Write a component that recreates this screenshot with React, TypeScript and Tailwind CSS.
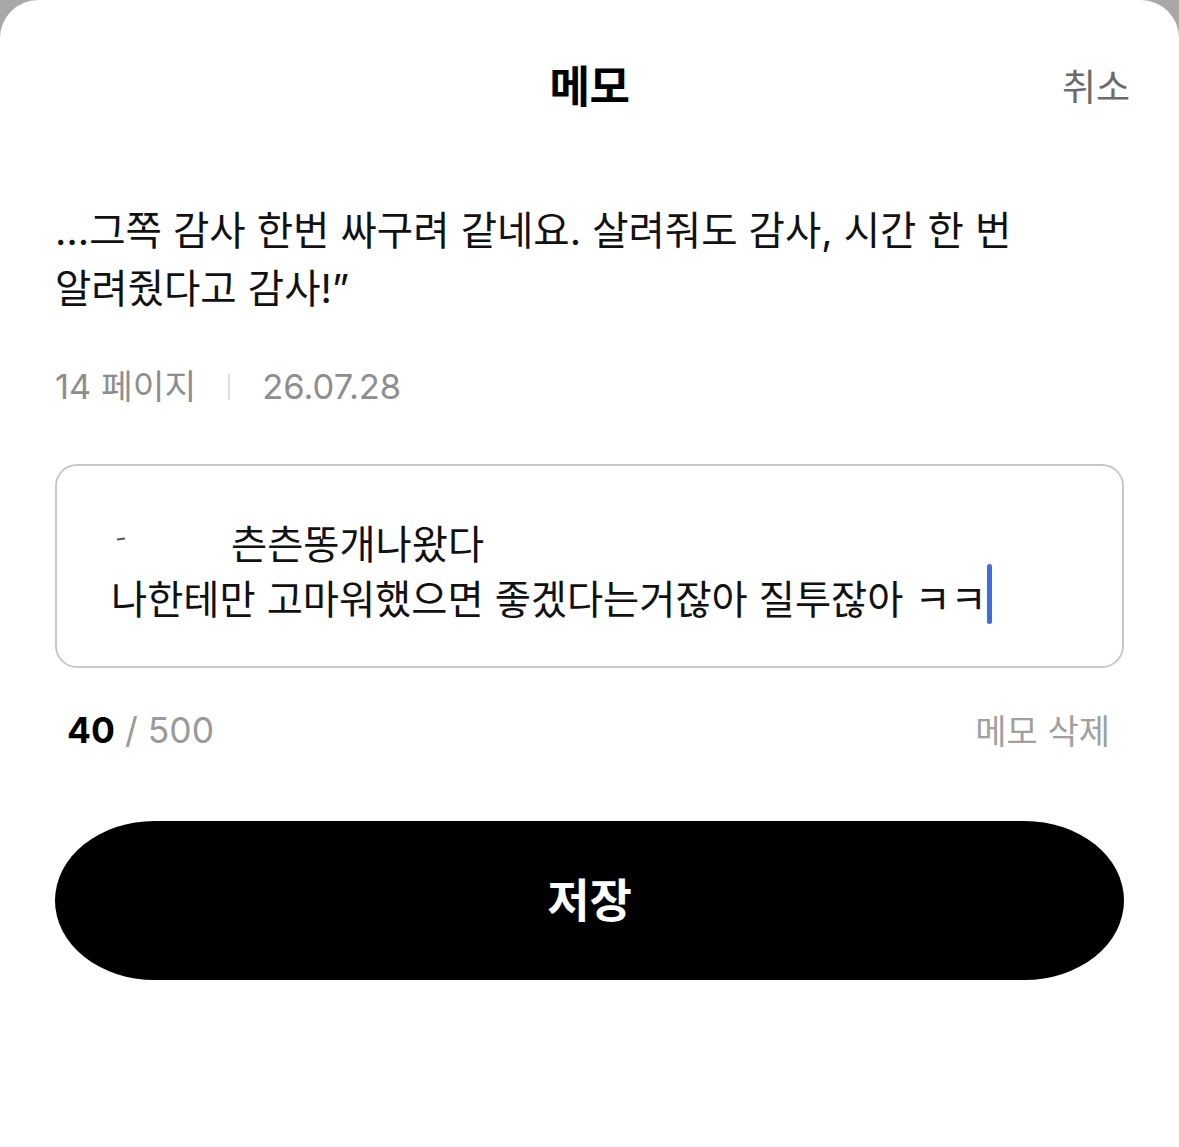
export default function App() {
  return (
    <div className="min-h-[1147px] w-full bg-[#a8a8a8] font-['Inter','Noto_Sans_CJK_KR',sans-serif]">
      <div className="min-h-[1147px] bg-white rounded-t-[38px] px-[55px] flex flex-col">
        {/* Header */}
        <div className="h-[170px] grid grid-cols-[1fr_auto_1fr] items-center">
          <div />
          <h1 className="text-[44px] leading-[52px] font-bold text-black tracking-[-0.5px] translate-y-[2px]">메모</h1>
          <button className="justify-self-end mr-[-6px] text-[37px] leading-[44px] text-[#6b6b6b] translate-y-[3px]">취소</button>
        </div>

        {/* Quote */}
        <p className="mt-[32px] text-[39.5px] leading-[58px] text-[#111] whitespace-nowrap">
          …그쪽 감사 한번 싸구려 같네요. 살려줘도 감사, 시간 한 번
          <br />
          알려줬다고 감사!”
        </p>

        {/* Meta */}
        <div className="mt-[49px] h-[40px] flex items-center text-[34.5px] text-[#8e8e8e]">
          <span>14 페이지</span>
          <span className="mx-[32px] w-[2px] h-[26px] bg-[#e0e0e0]" />
          <span>26.07.28</span>
        </div>

        {/* Memo box */}
        <div className="mt-[57px] h-[204px] border-2 border-[#c8c8c8] rounded-[22px] pl-[54px] pt-[51px] text-[39.3px] leading-[55px] text-[#111]">
          <div className="flex items-center h-[55px]">
            <span className="ml-[6px] w-[8px] h-[2px] bg-[#555] -translate-y-[6px] -rotate-6" />
            <span className="ml-[106px]">츤츤똥개나왔다</span>
          </div>
          <div className="flex items-center h-[55px] whitespace-nowrap">
            <span>나한테만 고마워했으면 좋겠다는거잖아 질투잖아 ㅋㅋ</span>
            <span className="ml-[0px] w-[5px] h-[60px] rounded-full bg-[#3d6ee0] -translate-y-[6px]" />
          </div>
        </div>

        {/* Counter row */}
        <div className="mt-[43px] h-[40px] flex items-center justify-between pl-[12px] pr-[14px]">
          <div className="text-[35.5px]">
            <span className="font-bold text-black">40</span>
            <span className="text-[#9a9a9a]"> / 500</span>
          </div>
          <button className="text-[34px] text-[#a0a0a0]">메모 삭제</button>
        </div>

        {/* Save button */}
        <button className="mt-[70px] h-[159px] w-full bg-black rounded-[100px/80px] flex items-center justify-center text-white text-[46px] font-bold">
          저장
        </button>
      </div>
    </div>
  );
}
